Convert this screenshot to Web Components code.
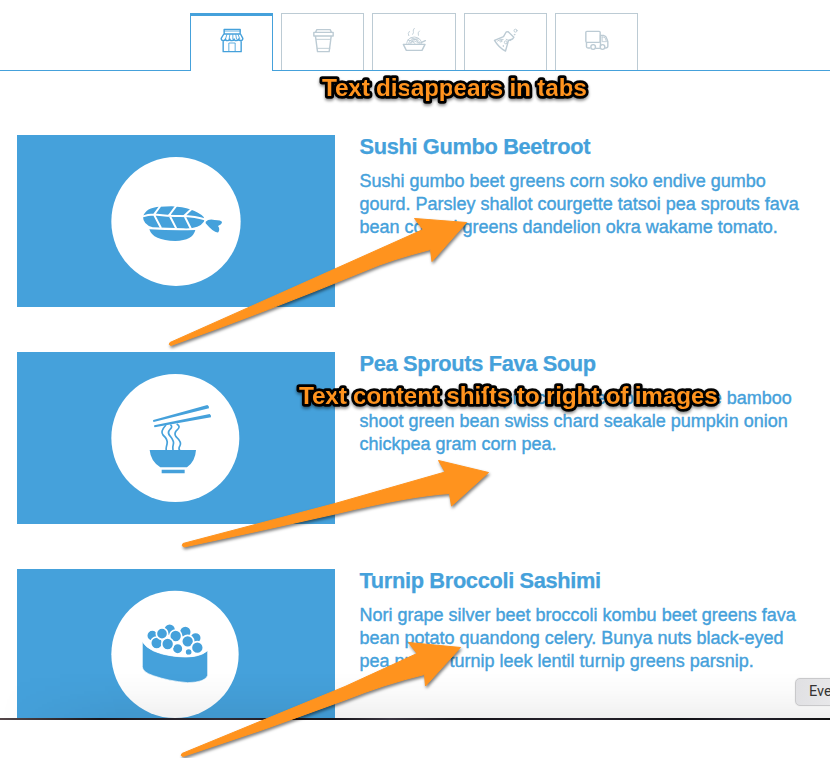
<!DOCTYPE html>
<html lang="en"><head><meta charset="utf-8"><title>Menu</title>
<style>
html,body{margin:0;padding:0;background:#fff;width:830px;height:758px;overflow:hidden}
body{font-family:"Liberation Sans",Arial,sans-serif;color:#45a1db}
</style></head><body>
<demo-page></demo-page>
<script>
const define=(name,html)=>{
  const t=document.createElement('template');t.innerHTML=html;
  customElements.define(name,class extends HTMLElement{
    constructor(){super();this.attachShadow({mode:'open'}).append(t.content.cloneNode(true));}
  });
};

define('icon-tab',`<style>
:host{box-sizing:border-box;display:flex;width:83px;height:57px;border:1px solid #bccbd4;border-bottom:0;padding-top:12px;align-items:flex-start;justify-content:center;color:#bccbd4;background:#fff}
:host([wide]){width:84px}
:host([active]){border-color:#45a1db;border-top-width:3px;padding-top:10px;height:58px;color:#45a1db}
::slotted(svg){width:28px;height:28px;fill:none;stroke:currentColor;stroke-width:4.2;stroke-linejoin:round;stroke-linecap:round}
</style><slot></slot>`);

define('tab-bar',`<style>
:host{display:flex;box-sizing:border-box;height:71px;padding:13px 0 0 190px;gap:8px;background:linear-gradient(#45a1db,#45a1db) 0 70px/100% 1px no-repeat}
</style>
<icon-tab active><svg viewBox="112.5 79 84 84"><path d="M131 102V89h48v13M130 103h50l7 13q0 7-6 7t-7-5q-1 5-7 5t-6-5q-1 5-7 5t-6-5q-1 5-7 5t-6-5q-1 5-7 5t-6-7zM128 124v32h54v-32"/><path stroke-width="2.6" d="M139 105l-4 13M148 105l-2 13M157 105v13M166 105l2 13M173 105l5 13M131 94h48M145 155v-25h19v25"/></svg></icon-tab>
<icon-tab><svg viewBox="385.5 79 84 84"><path d="M405 98l4-8h40l4 8zM400 98h58v11h-58zM405 110l6 46h35l6-46"/><path stroke-width="2.8" d="M408 119h42M410 146h38"/></svg></icon-tab>
<icon-tab wide><svg viewBox="0 79 84 84"><path d="M10 134h65l-9 18H19zM63 129l13-6"/><g stroke-width="2.6"><path d="M20 131q2-17 23-19 20 2 22 19M26 131q3-12 17-13 14 1 17 13M33 131q3-7 10-7t11 7M23 121q12 0 22 10M33 114q17 3 25 17M30 131q8-14 26-14"/><path d="M28 95q-6 6-2 13M43 86q-5 6-3 9t-2 9M58 94q-6 4-3 13"/></g></svg></icon-tab>
<icon-tab><svg viewBox="274.5 79 84 84"><path d="M282 122l27-11 8-14 6-1 17 17-4 5-12 4-9 32q-20-10-33-32z"/><g stroke-width="2.8"><path d="M291 124q9-8 17-5M317 119q8 5 14 4"/><circle cx="316" cy="128" r="4.5"/><circle cx="301" cy="124" r="3"/><circle cx="308" cy="139" r="1"/><circle cx="345" cy="93" r="4.5"/><circle cx="342" cy="105" r="1"/></g></svg></icon-tab>
<icon-tab><svg viewBox="547.5 79 84 84"><rect x="556" y="95" width="43" height="33" rx="3"/><path d="M558 129v12q0 3 5 4h5M587 146h10M600 107h9q8 2 10 10l3 9v14q0 5-7 5M600 107v32"/><path stroke-width="2.6" d="M605 112v14h13l-4-11q-2-4-9-3z"/><circle cx="578" cy="142" r="7"/><circle cx="606" cy="142" r="7"/></svg></icon-tab>`);

define('menu-item',`<style>
:host{display:flex;height:172px;gap:24.5px}
figure{margin:0;width:318px;height:172px;flex:none;background:#45a1db}
::slotted(svg){display:block;width:318px;height:172px}
.copy{flex:none;width:460px}
h2{margin:0;font-size:21.8px;line-height:24px;font-weight:bold;white-space:nowrap;letter-spacing:-.34px;-webkit-text-stroke:.25px currentColor}
p{margin:10.5px 0 0;font-size:18px;line-height:23px;white-space:nowrap;-webkit-text-stroke:.4px currentColor}
</style><figure><slot name="art"></slot></figure><div class="copy"><h2><slot name="title"></slot></h2><p><slot></slot></p></div>`);

define('edge-button',`<style>
:host{display:block;box-sizing:border-box;width:70px;height:28px;border:1px solid #c9c9cb;border-radius:5px;background:linear-gradient(100deg,#e0e0e3,#eeeeef);box-shadow:0 0 1px #ccc;padding-left:13px;font:14.5px/26px Roboto,sans-serif;color:#333;white-space:nowrap}
</style><slot></slot>`);

define('note-layer',`<style>
:host{display:block}
svg{display:block;width:830px;height:758px}
.a{fill:#ff931e;stroke:#ff931e;stroke-width:1;stroke-linejoin:round;filter:drop-shadow(1px 2px 1.5px rgba(0,0,0,.5))}
text{font:bold 24.5px "Liberation Sans",Arial,sans-serif;fill:#ff931e;stroke:#000;stroke-width:5.6px;stroke-linejoin:round;paint-order:stroke fill;filter:drop-shadow(0 2px 1.5px rgba(0,0,0,.45))}
</style><svg viewBox="0 0 830 758">
<path class="a" d="M170 342.5Q297 286 423 229.5L414.500 218.500 466.500 222.500 432 261.500 430.500 249.500Q390 260 367 270Q268 311 171 345.500Q168 345 170 342.500Z"/>
<path class="a" d="M183 543.500L335 503.500 445 472 438.500 460.500 488.500 472.500 451.500 506 449.500 493.500Q410 496 335 514Q260 531 184 547Q181 546 183 543.500Z"/>
<path class="a" d="M182 753.500L345 686.500 417 653.500 408.500 642.500 460.500 647.500 425.500 686 424.500 674.500Q385 684 345 700Q265 730 183 756.500Q180 756 182 753.500Z"/>
<text x="322" y="96" textLength="265" lengthAdjust="spacing">Text disappears in tabs</text>
<text x="299" y="404" textLength="419" lengthAdjust="spacing">Text content shifts to right of images</text>
</svg>`);

define('demo-page',`<style>
:host{display:block;position:relative;width:830px;height:758px;overflow:hidden}
.view{position:relative;height:718px;overflow:hidden}
.list{display:flex;flex-direction:column;gap:45px;padding:64px 0 0 17px}
.fade{position:absolute;left:0;right:0;bottom:0;height:46px;background:linear-gradient(90deg,#fff0,#0000),linear-gradient(transparent,rgba(0,0,0,.02) 45%,rgba(0,0,0,.06));-webkit-mask:linear-gradient(90deg,transparent,#000 120px)}
edge-button{position:absolute;left:795px;top:678px}
.strip{height:2px;background:linear-gradient(90deg,#55484a,#17151a 12%,#302b35 26%,#151318 40%,#3a3540 47%,#141218 56%,#29252f 70%,#101014 82%,#24222e 90%,#111)}
note-layer{position:absolute;inset:0}
</style>
<div class="view"><tab-bar></tab-bar>
<div class="list">
<menu-item><svg slot="art" viewBox="-249 -30 954 516"><ellipse cx="228" cy="229.500" rx="194" ry="193.500" fill="#fff"/><g fill="#45a1db"><path d="M129 215Q137 187 180 185L215 184Q281 187 311 216Q315 229 310 232Q298 252 250 250L158 247Q129 238 129 215Z"/><path d="M148 253Q218 257 286 255Q279 286 226 288Q158 287 148 253ZM317 230Q326 221 344 225Q364 225 366 231Q366 238 354 243Q361 252 355 262Q342 265 317 235Z"/></g><path fill="none" stroke="#fff" stroke-width="6" d="M126 215Q152 206 179 210T240 213Q290 214 317 224M181 183L162 209 183 249M229 182L208 210 229 251M278 189L253 212 273 252"/></svg>
<span slot="title">Sushi Gumbo Beetroot</span>Sushi gumbo beet greens corn soko endive gumbo<br>gourd. Parsley shallot courgette tatsoi pea sprouts fava<br>bean collard greens dandelion okra wakame tomato.</menu-item>
<menu-item><svg slot="art" viewBox="-249 -39 954 516"><circle cx="226" cy="219" r="192" fill="#fff"/><g fill="#45a1db"><path d="M149 255H288Q286 289 261 307H181Q152 289 149 255ZM185 314H254V325H185ZM160 165L322 120Q328 122 327 130L161 171Q157 168 160 165ZM163 181L329 147Q334 149 333 157L164 187Q160 184 163 181Z"/></g><path fill="none" stroke="#45a1db" stroke-width="5" d="M198 180Q180 199 189 210Q205 224 201 238T199 256M211 179Q219 185 211 192Q200 203 211 214Q223 229 220 238T219 256M230 177Q243 184 233 193Q220 204 228 215Q246 232 240 242T240 257"/></svg>
<span slot="title">Pea Sprouts Fava Soup</span>Lotus root water spinach fennel kombu maize bamboo<br>shoot green bean swiss chard seakale pumpkin onion<br>chickpea gram corn pea.</menu-item>
<menu-item><svg slot="art" viewBox="-249 -33 954 516"><circle cx="225" cy="223" r="191" fill="#fff"/><g fill="#45a1db" stroke="#fff" stroke-width="5"><circle cx="157" cy="167" r="17"/><circle cx="209" cy="149" r="18"/><circle cx="256" cy="156" r="18"/><circle cx="287" cy="174" r="17"/><circle cx="170" cy="189" r="18"/><circle cx="186" cy="161" r="17"/><circle cx="227" cy="168" r="18"/><circle cx="263" cy="184" r="18"/><circle cx="233" cy="206" r="16"/><circle cx="266" cy="216" r="11"/><circle cx="203" cy="192" r="18"/><circle cx="292" cy="203" r="18"/></g><path d="M127 184Q145 219 223 229Q297 238 323 211V286Q317 307 263 308Q205 303 160 287Q127 276 127 260Z" fill="#45a1db" stroke="#fff" stroke-width="2"/><path d="M126 179Q147 215 223 226Q296 235 325 207" fill="none" stroke="#fff" stroke-width="6"/></svg>
<span slot="title">Turnip Broccoli Sashimi</span>Nori grape silver beet broccoli kombu beet greens fava<br>bean potato quandong celery. Bunya nuts black-eyed<br>pea prairie turnip leek lentil turnip greens parsnip.</menu-item>
</div><div class="fade"></div><edge-button>Every</edge-button></div>
<div class="strip"></div><note-layer></note-layer>`);
</script></body></html>
